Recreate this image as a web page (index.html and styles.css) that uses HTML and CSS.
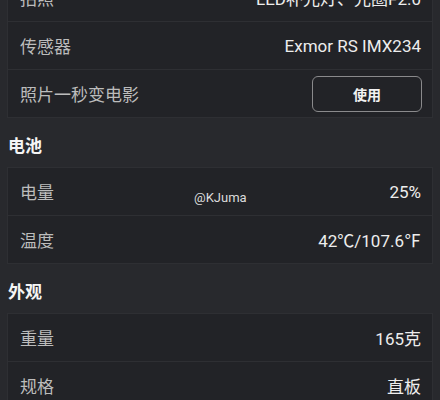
FILE: index.html
```html
<!DOCTYPE html>
<html lang="zh">
<head>
<meta charset="utf-8">
<link rel="stylesheet" href="styles.css">
</head>
<body>
<div class="page">
  <div class="card first">
    <div class="row"><span class="label">拍照</span><span class="value">LED补光灯、光圈F2.0</span></div>
    <div class="row"><span class="label">传感器</span><span class="value">Exmor RS IMX234</span></div>
    <div class="row"><span class="label">照片一秒变电影</span><button class="btn">使用</button></div>
  </div>
  <h2 class="header">电池</h2>
  <div class="card">
    <div class="row"><span class="label">电量</span><span class="value">25%</span></div>
    <div class="row"><span class="label">温度</span><span class="value">42℃/107.6℉</span></div>
  </div>
  <h2 class="header">外观</h2>
  <div class="card">
    <div class="row"><span class="label">重量</span><span class="value">165克</span></div>
    <div class="row"><span class="label">规格</span><span class="value">直板</span></div>
  </div>
  <div class="watermark">@KJuma</div>
</div>
</body>
</html>
```
FILE: styles.css
```css
html, body {
  margin: 0;
  padding: 0;
  background: #28292d;
}
body {
  width: 440px;
  height: 400px;
  overflow: hidden;
  font-family: Roboto, "Noto Sans CJK SC", sans-serif;
}
.page {
  position: relative;
  margin-top: -27px;
  padding-top: 1px;
}
.card {
  margin: 0 7px;
  background: #222327;
  border: 1px solid #2e2f33;
}
.card.first {
  margin-top: -1px;
}
.row {
  height: 47px;
  display: flex;
  align-items: center;
  justify-content: space-between;
  padding: 0 11px 0 12px;
}
.row + .row {
  border-top: 1px solid #2e2f33;
}
.label {
  font-size: 17px;
  color: #bcbcbc;
}
.value {
  font-size: 17px;
  color: #ededed;
}
.btn {
  width: 110px;
  height: 36px;
  margin-right: -1px;
  background: transparent;
  border: 1px solid #8a8a8c;
  border-radius: 6px;
  color: #f2f2f2;
  font-family: "Noto Sans CJK SC", sans-serif;
  font-size: 14px;
  font-weight: bold;
}
.header {
  margin: 0;
  padding: 4px 0 0 8px;
  height: 45px;
  line-height: 45px;
  font-size: 17px;
  font-weight: bold;
  color: #f5f5f5;
  font-family: "Noto Sans CJK SC", sans-serif;
}
.watermark {
  position: absolute;
  left: 194px;
  top: 217px;
  font-size: 13px;
  color: #dcdcdc;
  font-family: Roboto, sans-serif;
}
```
